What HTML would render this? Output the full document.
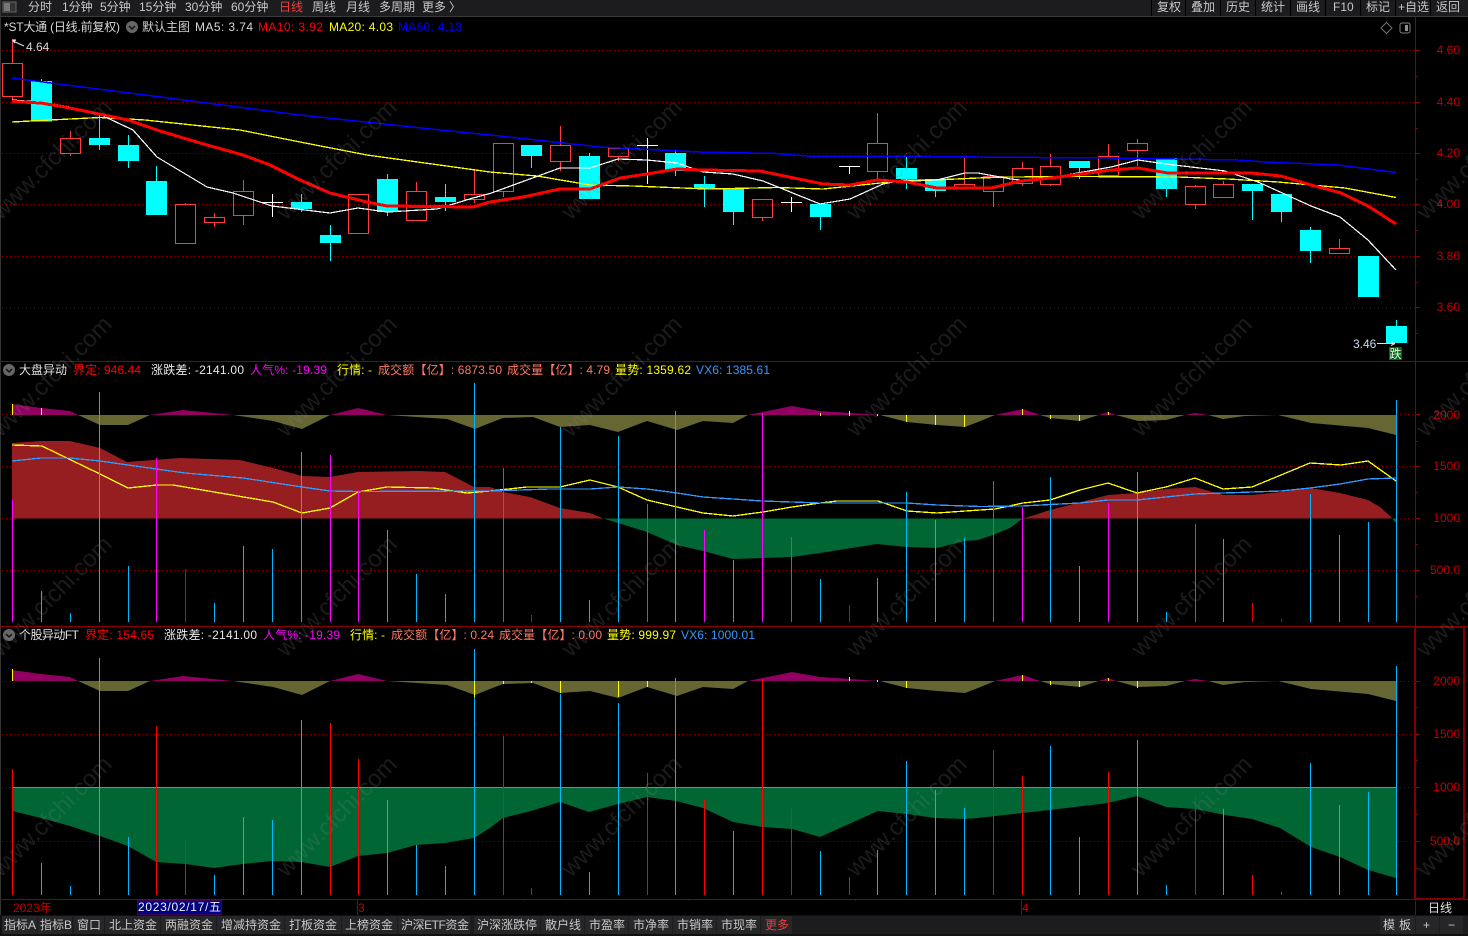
<!DOCTYPE html>
<html><head><meta charset="utf-8"><title>K线</title>
<style>
html,body{margin:0;padding:0;background:#000;width:1468px;height:936px;overflow:hidden}
svg{display:block}
text{font-family:"Liberation Sans","Noto Sans CJK SC",sans-serif;font-size:12px}
.m text{fill:#c8c8c8}
.ax text{fill:#c00000;text-anchor:end}
.wm text{font-size:24px;fill:#888;opacity:.2}
</style></head><body>
<svg width="1468" height="936" viewBox="0 0 1468 936" xmlns="http://www.w3.org/2000/svg">
<rect width="1468" height="936" fill="#000"/>
<!-- top bar -->
<rect width="1468" height="16" fill="#1c1c1e"/>
<rect y="16" width="1468" height="1" fill="#3a3a3a"/>
<rect x="0" y="0" width="1" height="936" fill="#333"/>
<path d="M3 2h13v10H3z" fill="#333" stroke="#666"/><path d="M4 3h6v8H4z" fill="#777"/>
<g fill="#000" shape-rendering="crispEdges"><rect x="1151" y="0" width="1" height="16"/><rect x="1185" y="0" width="1" height="16"/><rect x="1220" y="0" width="1" height="16"/><rect x="1255" y="0" width="1" height="16"/><rect x="1290" y="0" width="1" height="16"/><rect x="1325" y="0" width="1" height="16"/><rect x="1360" y="0" width="1" height="16"/><rect x="1395" y="0" width="1" height="16"/><rect x="1430" y="0" width="1" height="16"/></g>
<g class="m">
<text x="28" y="11">分时</text><text x="62" y="11">1分钟</text><text x="100" y="11">5分钟</text><text x="139" y="11">15分钟</text><text x="185" y="11">30分钟</text><text x="231" y="11">60分钟</text><text x="279" y="11" style="fill:#f03c3c">日线</text><text x="312" y="11">周线</text><text x="346" y="11">月线</text><text x="379" y="11">多周期</text><text x="422" y="11">更多</text><text x="449" y="11">〉</text>
<text x="1157" y="11">复权</text><text x="1191" y="11">叠加</text><text x="1226" y="11">历史</text><text x="1261" y="11">统计</text><text x="1296" y="11">画线</text><text x="1333" y="11">F10</text><text x="1366" y="11">标记</text><text x="1398" y="11">+自选</text><text x="1436" y="11">返回</text>
</g>

<!-- grid -->
<g stroke="#8a0000" stroke-width="1" stroke-dasharray="1 3" shape-rendering="crispEdges" fill="none">
<path d="M2 50.5H1415M2 102.5H1415M2 153.5H1415M2 204.5H1415M2 256.5H1415M2 307.5H1415"/>
<path d="M2 414.5H12M1396 414.5H1415M2 466.5H1415M2 518.5H12M1396 518.5H1415M2 570.5H1415"/>
<path d="M2 681.5H12M1396 681.5H1415M2 734.5H1415M2 787.5H12M1396 787.5H1415M2 841.5H1415"/>
</g>

<!-- candles -->
<g shape-rendering="crispEdges">
<g stroke="#ff3c3c" stroke-width="1" fill="none">
<path d="M12.5 40V63M12.5 97V100M70.5 131V138M70.5 154V156M185.5 203V204M214.5 213V217M214.5 223V227M243.5 180V191M243.5 216V225M416.5 182V191M474.5 169V194M474.5 200V203M503.5 192V197M560.5 126V145M560.5 162V171M618.5 157V161M762.5 218V221M877.5 113V143M877.5 172V179M964.5 158V184M993.5 175V176M993.5 192V207M1022.5 162V168M1022.5 184V186M1050.5 154V166M1050.5 185V186M1108.5 144V156M1137.5 139V143M1137.5 151V166M1195.5 185V186M1195.5 205V209M1223.5 181V184M1339.5 239V248"/>
<rect x="2.5" y="63.5" width="20" height="33"/>
<rect x="60.5" y="138.5" width="20" height="15"/>
<rect x="175.5" y="204.5" width="20" height="39"/>
<rect x="204.5" y="217.5" width="20" height="5"/>
<rect x="233.5" y="191.5" width="20" height="24"/>
<rect x="348.5" y="194.5" width="20" height="39"/>
<rect x="406.5" y="191.5" width="20" height="29"/>
<rect x="464.5" y="194.5" width="20" height="5"/>
<rect x="493.5" y="143.5" width="20" height="48"/>
<rect x="550.5" y="145.5" width="20" height="16"/>
<rect x="608.5" y="148.5" width="20" height="8"/>
<rect x="752.5" y="199.5" width="20" height="18"/>
<rect x="867.5" y="143.5" width="20" height="28"/>
<rect x="954.5" y="184.5" width="20" height="3"/>
<rect x="983.5" y="176.5" width="20" height="15"/>
<rect x="1012.5" y="168.5" width="20" height="15"/>
<rect x="1040.5" y="166.5" width="20" height="18"/>
<rect x="1098.5" y="156.5" width="20" height="19"/>
<rect x="1127.5" y="143.5" width="20" height="7"/>
<rect x="1185.5" y="186.5" width="20" height="18"/>
<rect x="1213.5" y="184.5" width="20" height="13"/>
<rect x="1329.5" y="248.5" width="20" height="5"/>
</g>
<g stroke="#00ffff" stroke-width="1" fill="none">
<path d="M41.5 79V81M99.5 115V150M128.5 135V168M156.5 166V181M301.5 194V212M330.5 225V261M387.5 174V216M445.5 184V211M531.5 156V168M589.5 153V156M675.5 150V176M704.5 176V207M733.5 212V225M820.5 217V230M906.5 157V189M935.5 191V197M1079.5 168V179M1166.5 189V197M1252.5 191V220M1281.5 212V222M1310.5 227V263M1396.5 320V326"/>
</g>
<g fill="#00ffff">
<rect x="31" y="81" width="21" height="40.500"/>
<rect x="89" y="138" width="21" height="7"/>
<rect x="118" y="145" width="21" height="16"/>
<rect x="146" y="181" width="21" height="34"/>
<rect x="291" y="202" width="21" height="7"/>
<rect x="320" y="235" width="21" height="8"/>
<rect x="377" y="179" width="21" height="33"/>
<rect x="435" y="197" width="21" height="5"/>
<rect x="521" y="145" width="21" height="11"/>
<rect x="579" y="156" width="21" height="43"/>
<rect x="665" y="153" width="21" height="18"/>
<rect x="694" y="184" width="21" height="5"/>
<rect x="723" y="189" width="21" height="23"/>
<rect x="810" y="204" width="21" height="13"/>
<rect x="896" y="168" width="21" height="11"/>
<rect x="925" y="179" width="21" height="12"/>
<rect x="1069" y="161" width="21" height="7"/>
<rect x="1156" y="158" width="21" height="31"/>
<rect x="1242" y="184" width="21" height="7"/>
<rect x="1271" y="194" width="21" height="18"/>
<rect x="1300" y="230" width="21" height="21"/>
<rect x="1358" y="256" width="21" height="41"/>
<rect x="1386" y="326" width="21" height="17"/>
</g>
<path d="M262 202.500H283M272.500 194V217M637 145.500H658M647.500 138V184M781 202.500H802M791.500 197V212M839 166.500H860M849.500 166V174" stroke="#fff" fill="none"/>
</g>

<!-- MA lines -->
<g fill="none" stroke-linejoin="round" shape-rendering="crispEdges">
<polyline stroke="#0000ff" stroke-width="1.500" points="12,78 145,95 300,115 440,130 490,135 600,147 700,152 776,153.500 807,156 890,156 978,157 1038,157.500 1111,158 1238,160 1265,162 1338,165 1396,172.500"/>
<polyline stroke="#ffff00" stroke-width="1.300" points="12,122 50,120 100,117.500 145,120 240,130 300,142 367,155 490,172 537,176 590,185 633,186 707,189 777,187.500 823,189 890,182 978,178 1011,177 1078,176.500 1178,177 1228,179 1278,182 1345,188 1396,197.500"/>
<polyline stroke="#ffffff" stroke-width="1.200" points="12,100 41,102 70,107 99,114 133,130 157,157 207,187 233,193 272,206 330,213 358,208 387,212 437,209 473,198 490,193.500 560,168 590,168 618,159 647,160 677,163 703,172 733,174 763,181 820,204 850,199 883,184 903,180 937,180 965,173 978,173 1011,179 1028,181 1061,176 1111,167 1138,160 1166,164 1225,171 1258,182 1311,206 1340,217 1368,240 1396,270"/>
<polyline stroke="#ff0000" stroke-width="3" points="12,101.500 41,103 70,108 99,114 128,120 160,131 200,143 243,155 270,165 300,180 330,193 367,202 387,206 473,207 490,202 523,197 560,189 590,189 620,178 647,174 677,169 703,170 760,171 823,184 850,185 877,180 907,182 937,188 978,188 991,188 1021,181 1051,178 1111,170 1138,168 1168,173 1251,173 1281,176 1311,185 1341,193 1368,206 1396,224"/>
</g>

<!-- sub 1 / sub 2 top band -->
<clipPath id="b"><polygon points="12,404 41,408 70,411 78,415 100,425 128,425 150,415 183,410 213,413 233,415 273,421 302,429 330,415 358,408 387,415 447,419 475,429 490,423 503,418 533,417 560,427 590,425 618,432 647,421 677,430 703,421 733,423 748,415 792,406 820,411 880,415 907,422 937,425 965,427 978,422 995,415 1023,409 1040,415 1050,418 1080,421 1108,412 1116,415 1138,421 1166,420 1185,415 1195,413 1208,415 1223,419 1245,416 1278,415 1311,423 1368,428 1396,435 1396,415 12,415"/></clipPath>
<g clip-path="url(#b)"><rect x="0" y="395" width="1468" height="20" fill="#900060"/><rect x="0" y="415" width="1468" height="30" fill="#666633"/></g>
<g transform="translate(0,266)"><g clip-path="url(#b)"><rect x="0" y="395" width="1468" height="20" fill="#900060"/><rect x="0" y="415" width="1468" height="30" fill="#666633"/></g></g>

<!-- sub 1 red/green area -->
<clipPath id="v"><polygon points="12,443 41,441 70,441 100,448 127,462 180,458 240,460 273,468 302,476 330,477 358,472 417,471 445,472 474,487 490,487 503,492 530,497 560,508 590,513 605,519 618,523 647,532 677,545 703,551 733,559 762,558 792,557 820,553 877,544 907,547 937,548 965,541 978,540 993,535 1010,528 1022,519 1050,510 1108,495 1137,493 1166,489 1195,487 1223,495 1252,495 1281,492 1310,488 1340,493 1368,500 1380,507 1390,516 1396,523 1396,518.500 12,518.500"/></clipPath>
<g clip-path="url(#v)"><rect x="0" y="430" width="1468" height="88.500" fill="#961e20"/><rect x="0" y="518.500" width="1468" height="50" fill="#006634"/></g>
<g fill="none" stroke-linejoin="round" shape-rendering="crispEdges">
<polyline stroke="#ffff00" stroke-width="1.300" points="12,445 42,446 100,474 128,488 157,485 173,485 273,502 302,513 330,508 358,492 387,487 433,488 467,493 490,491 527,487 560,487 590,480 618,487 647,500 677,507 703,513 733,516 763,512 792,507 820,503 837,501 878,501 907,511 937,513 980,510 995,509 1023,503 1050,500 1080,490 1108,483 1137,493 1166,487 1195,478 1223,489 1252,487 1310,463 1341,465 1368,461 1396,481"/>
<polyline stroke="#3399ff" stroke-width="1.300" points="12,461 41,458 70,458 100,461 128,465 185,473 243,478 302,487 330,491 358,491.500 470,491 490,491 550,489 590,489 618,487 647,489 677,493 703,497 733,499 762,501 792,502 820,503 907,503 937,505 980,506.500 1022,506 1050,504.500 1080,503 1108,500 1137,500 1166,497 1195,494 1252,492 1281,491 1310,488 1340,484 1368,479 1396,478"/>
</g>
<g fill="none" stroke-width="1" shape-rendering="crispEdges">
<path stroke="#00b8ff" d="M41.500 622V591M70.500 622V613M99.500 622V392M128.500 622V566M214.500 622V603M243.500 622V546M272.500 622V549M301.500 622V452M387.500 622V530M416.500 622V574M445.500 622V594M474.500 622V383M560.500 622V427M589.500 622V600M618.500 622V436M675.500 622V411M733.500 622V560M820.500 622V579M877.500 622V578M906.500 622V492M935.500 622V520M964.500 622V538M1050.500 622V477M1079.500 622V566M1137.500 622V472M1166.500 622V612M1223.500 622V539M1310.500 622V494M1339.500 622V535M1368.500 622V522M1396.500 622V400"/>
<path stroke="#ff00ff" d="M12.500 622V500M156.500 622V458M330.500 622V455M358.500 622V490M503.500 622V468M647.500 622V504M704.500 622V530M762.500 622V413M791.500 622V537M993.500 622V481M1022.500 622V507M1108.500 622V503M1195.500 622V524"/>
<path stroke="#e00000" d="M185.500 622V569M531.500 622V615M849.500 622V605M1252.500 622V603M1281.500 622V619"/>
<path stroke="#ffff00" d="M12.500 404V415M41.500 408V415M820.500 413V416M849.500 411V416M877.500 414V416M906.500 415V422M935.500 415V425M964.500 415V427M1022.500 409V415M1050.500 415V419M1079.500 415V421M1108.500 412V415"/>
</g>

<!-- sub 2 green -->
<polygon fill="#006634" points="12,787.500 12,811 41,818 70,826 100,836 128,846 156,862 185,864 214,868 243,864 272,861 301,862 330,867 358,856 387,853 416,845 445,843 474,838 490,828 503,818 531,811 560,802 589,812 618,804 647,797 676,801 703,808 733,822 762,827 792,829 820,837 878,811 907,814 935,818 965,819 978,818 1022,813 1050,810 1108,803 1137,796 1166,807 1195,809 1225,815 1252,819 1280,828 1311,847 1340,857 1368,870 1396,878 1396,787.500"/>
<path d="M12 787.500H1396" stroke="#3399ff" stroke-width="1.200" fill="none" shape-rendering="crispEdges"/>
<g fill="none" stroke-width="1" shape-rendering="crispEdges">
<path stroke="#00b8ff" d="M41.500 895V863M70.500 895V886M99.500 895V658M128.500 895V837M214.500 895V875M243.500 895V817M272.500 895V820M301.500 895V720M387.500 895V800M416.500 895V845M445.500 895V866M474.500 895V649M560.500 895V694M589.500 895V872M618.500 895V703M675.500 895V678M733.500 895V831M820.500 895V851M877.500 895V850M906.500 895V761M935.500 895V790M964.500 895V808M1050.500 895V746M1079.500 895V837M1137.500 895V740M1166.500 895V885M1223.500 895V809M1310.500 895V763M1339.500 895V805M1368.500 895V792M1396.500 895V666"/>
<path stroke="#ff0000" d="M12.500 895V769M156.500 895V726M185.500 895V840M330.500 895V723M358.500 895V759M503.500 895V736M531.500 895V888M647.500 895V773M704.500 895V800M762.500 895V679M791.500 895V807M849.500 895V877M993.500 895V750M1022.500 895V776M1108.500 895V772M1195.500 895V794M1252.500 895V875M1281.500 895V892"/>
<path stroke="#ffff00" d="M12.500 669V681M474.500 681V697M503.500 681V684M531.500 681V683M560.500 681V693M618.500 681V697M647.500 681V687M849.500 677V681M877.500 680V682M906.500 681V688M1022.500 675V681M1050.500 681V685M1079.500 681V687M1108.500 678V681M1137.500 681V688"/>
</g>

<!-- axis + frames -->
<g fill="none" stroke="#8a0000" stroke-width="1" shape-rendering="crispEdges">
<path d="M1415.500 17V916"/>
<path d="M0 361.500H1468M0 626.500H1468M0 899.500H1468"/>
<path d="M1415 50.500h5M1415 102.500h5M1415 153.500h5M1415 204.500h5M1415 256.500h5M1415 307.500h5M1415 76.500h3M1415 128.500h3M1415 179.500h3M1415 230.500h3M1415 282.500h3M1415 333.500h3"/>
<path d="M1415 414.500h5M1415 466.500h5M1415 518.500h5M1415 570.500h5M1415 441.500h3M1415 492.500h3M1415 544.500h3M1415 596.500h3"/>
<path d="M1415 681.500h5M1415 734.500h5M1415 787.500h5M1415 841.500h5M1415 707.500h3M1415 760.500h3M1415 814.500h3M1415 868.500h3"/>
<path d="M523.500 899v2M689.500 899v2M855.500 899v2M357.500 899v16M1021.500 899v16"/>
</g>
<rect x="1415" y="627" width="49" height="272" fill="none" stroke="#800000" stroke-width="2" shape-rendering="crispEdges"/>
<g class="ax">
<text x="1460" y="54">4.60</text><text x="1460" y="106">4.40</text><text x="1460" y="157">4.20</text><text x="1460" y="208">4.00</text><text x="1460" y="260">3.80</text><text x="1460" y="311">3.60</text>
<text x="1460" y="419">2000</text><text x="1460" y="470">1500</text><text x="1460" y="522">1000</text><text x="1460" y="574">500.0</text>
<text x="1460" y="685">2000</text><text x="1460" y="738">1500</text><text x="1460" y="791">1000</text><text x="1460" y="845">500.0</text>
</g>

<!-- title main -->
<text x="4" y="31" fill="#d8d8d8" textLength="116">*ST大通 (日线.前复权)</text>
<circle cx="132" cy="27" r="6" fill="#666"/><path d="M129 26l3 3 3-3" stroke="#111" stroke-width="1.500" fill="none"/>
<text x="142" y="31" fill="#d0d0d0">默认主图</text>
<text x="195" y="31" fill="#d8d8d8" textLength="58">MA5: 3.74</text>
<text x="258" y="31" fill="#ff0000" textLength="65">MA10: 3.92</text>
<text x="329" y="31" fill="#ffff00" textLength="64">MA20: 4.03</text>
<text x="398" y="31" fill="#0000ff" textLength="64">MA60: 4.13</text>
<path d="M1386.500 22.500l5.500 5.500-5.500 5.500-5.500-5.500z" fill="none" stroke="#707070"/>
<rect x="1400" y="23" width="10" height="10" rx="2" fill="none" stroke="#808080"/><rect x="1405" y="25" width="3" height="6" fill="#909090"/>

<!-- annotations -->
<path d="M13 41l11 5M13 41l3-1M13 41l2 2" stroke="#e0e0e0" fill="none"/>
<path d="M12 40h4" stroke="#fff"/>
<text x="26" y="51" fill="#d8d8d8">4.64</text>
<text x="1353" y="348" fill="#c8d8e8">3.46</text>
<path d="M1377 343.500h18M1395 343.500l-4-2M1395 343.500l-4 2" stroke="#e0e0e0" fill="none"/>
<rect x="1389" y="347" width="13" height="13" fill="#006a10"/>
<text x="1389.500" y="358" fill="#f0f0f0">跌</text>

<!-- title sub1 -->
<circle cx="9" cy="370" r="6" fill="#666"/><path d="M6 369l3 3 3-3" stroke="#111" stroke-width="1.500" fill="none"/>
<text x="19" y="374" fill="#e0e0e0">大盘异动</text>
<text x="73" y="374" fill="#ff0000" textLength="68">界定: 946.44</text>
<text x="151" y="374" fill="#e8e8e8" textLength="93">涨跌差: -2141.00</text>
<text x="250" y="374" fill="#ff00ff" textLength="77">人气%: -19.39</text>
<text x="337" y="374" fill="#ffff00" textLength="35">行情: -</text>
<text x="378" y="374" fill="#ff7860" textLength="124">成交额【亿】: 6873.50</text>
<text x="507" y="374" fill="#ff7860" textLength="103">成交量【亿】: 4.79</text>
<text x="615" y="374" fill="#ffff00" textLength="76">量势: 1359.62</text>
<text x="696" y="374" fill="#3399ff" textLength="74">VX6: 1385.61</text>

<!-- title sub2 -->
<circle cx="9" cy="635" r="6" fill="#666"/><path d="M6 634l3 3 3-3" stroke="#111" stroke-width="1.500" fill="none"/>
<text x="19" y="639" fill="#e0e0e0" textLength="60">个股异动FT</text>
<text x="85" y="639" fill="#ff0000" textLength="69">界定: 154.65</text>
<text x="164" y="639" fill="#e8e8e8" textLength="93">涨跌差: -2141.00</text>
<text x="263" y="639" fill="#ff00ff" textLength="77">人气%: -19.39</text>
<text x="350" y="639" fill="#ffff00" textLength="35">行情: -</text>
<text x="391" y="639" fill="#ff7860" textLength="103">成交额【亿】: 0.24</text>
<text x="499" y="639" fill="#ff7860" textLength="103">成交量【亿】: 0.00</text>
<text x="607" y="639" fill="#ffff00" textLength="69">量势: 999.97</text>
<text x="681" y="639" fill="#3399ff" textLength="74">VX6: 1000.01</text>

<!-- date row -->
<text x="13" y="912" fill="#c00000">2023年</text>
<rect x="137.500" y="900.500" width="84" height="14" fill="#000080" stroke="#3a0060"/>
<text x="138" y="911" fill="#f0f0f0" textLength="83">2023/02/17/五</text>
<text x="358" y="912" fill="#c00000">3</text>
<text x="1022" y="912" fill="#c00000">4</text>
<text x="1428" y="912" fill="#e0e0e0">日线</text>

<!-- bottom bar -->
<rect x="0" y="915" width="1468" height="21" fill="#111"/>
<rect x="2" y="916" width="1466" height="18" fill="#1c1c1e"/>
<g fill="#262628" shape-rendering="crispEdges">
<rect x="2" y="916" width="35" height="18"/><rect x="38" y="916" width="34" height="18"/><rect x="74" y="916" width="30" height="18"/><rect x="105" y="916" width="55" height="18"/><rect x="161" y="916" width="55" height="18"/><rect x="217" y="916" width="67" height="18"/><rect x="285" y="916" width="56" height="18"/><rect x="342" y="916" width="55" height="18"/><rect x="398" y="916" width="72" height="18"/><rect x="474" y="916" width="66" height="18"/><rect x="541" y="916" width="43" height="18"/><rect x="585" y="916" width="43" height="18"/><rect x="629" y="916" width="43" height="18"/><rect x="673" y="916" width="43" height="18"/><rect x="717" y="916" width="43" height="18"/><rect x="761" y="916" width="31" height="18"/>
<rect x="1380" y="916" width="35" height="18"/><rect x="1416" y="916" width="23" height="18"/><rect x="1440" y="916" width="23" height="18"/>
</g>
<g class="m">
<text x="4" y="929">指标A</text><text x="40" y="929">指标B</text><text x="77" y="929">窗口</text><text x="109" y="929">北上资金</text><text x="165" y="929">两融资金</text><text x="221" y="929">增减持资金</text><text x="289" y="929">打板资金</text><text x="345" y="929">上榜资金</text><text x="401" y="929" textLength="68">沪深ETF资金</text><text x="477" y="929">沪深涨跌停</text><text x="545" y="929">散户线</text><text x="589" y="929">市盈率</text><text x="633" y="929">市净率</text><text x="677" y="929">市销率</text><text x="721" y="929">市现率</text><text x="765" y="929" style="fill:#f03c3c">更多</text>
<text x="1383" y="929">模</text><text x="1399" y="929">板</text><text x="1423" y="929">+</text><text x="1448" y="929">−</text>
</g>

<!-- watermark -->
<g class="wm">
<text transform="translate(1,221) rotate(-45)">www.cfchi.com</text><text transform="translate(286,221) rotate(-45)">www.cfchi.com</text><text transform="translate(571,221) rotate(-45)">www.cfchi.com</text><text transform="translate(856,221) rotate(-45)">www.cfchi.com</text><text transform="translate(1141,221) rotate(-45)">www.cfchi.com</text><text transform="translate(1426,221) rotate(-45)">www.cfchi.com</text>
<text transform="translate(1,438) rotate(-45)">www.cfchi.com</text><text transform="translate(286,438) rotate(-45)">www.cfchi.com</text><text transform="translate(571,438) rotate(-45)">www.cfchi.com</text><text transform="translate(856,438) rotate(-45)">www.cfchi.com</text><text transform="translate(1141,438) rotate(-45)">www.cfchi.com</text><text transform="translate(1426,438) rotate(-45)">www.cfchi.com</text>
<text transform="translate(1,658) rotate(-45)">www.cfchi.com</text><text transform="translate(286,658) rotate(-45)">www.cfchi.com</text><text transform="translate(571,658) rotate(-45)">www.cfchi.com</text><text transform="translate(856,658) rotate(-45)">www.cfchi.com</text><text transform="translate(1141,658) rotate(-45)">www.cfchi.com</text><text transform="translate(1426,658) rotate(-45)">www.cfchi.com</text>
<text transform="translate(1,878) rotate(-45)">www.cfchi.com</text><text transform="translate(286,878) rotate(-45)">www.cfchi.com</text><text transform="translate(571,878) rotate(-45)">www.cfchi.com</text><text transform="translate(856,878) rotate(-45)">www.cfchi.com</text><text transform="translate(1141,878) rotate(-45)">www.cfchi.com</text><text transform="translate(1426,878) rotate(-45)">www.cfchi.com</text>
</g>
</svg>
</body></html>
